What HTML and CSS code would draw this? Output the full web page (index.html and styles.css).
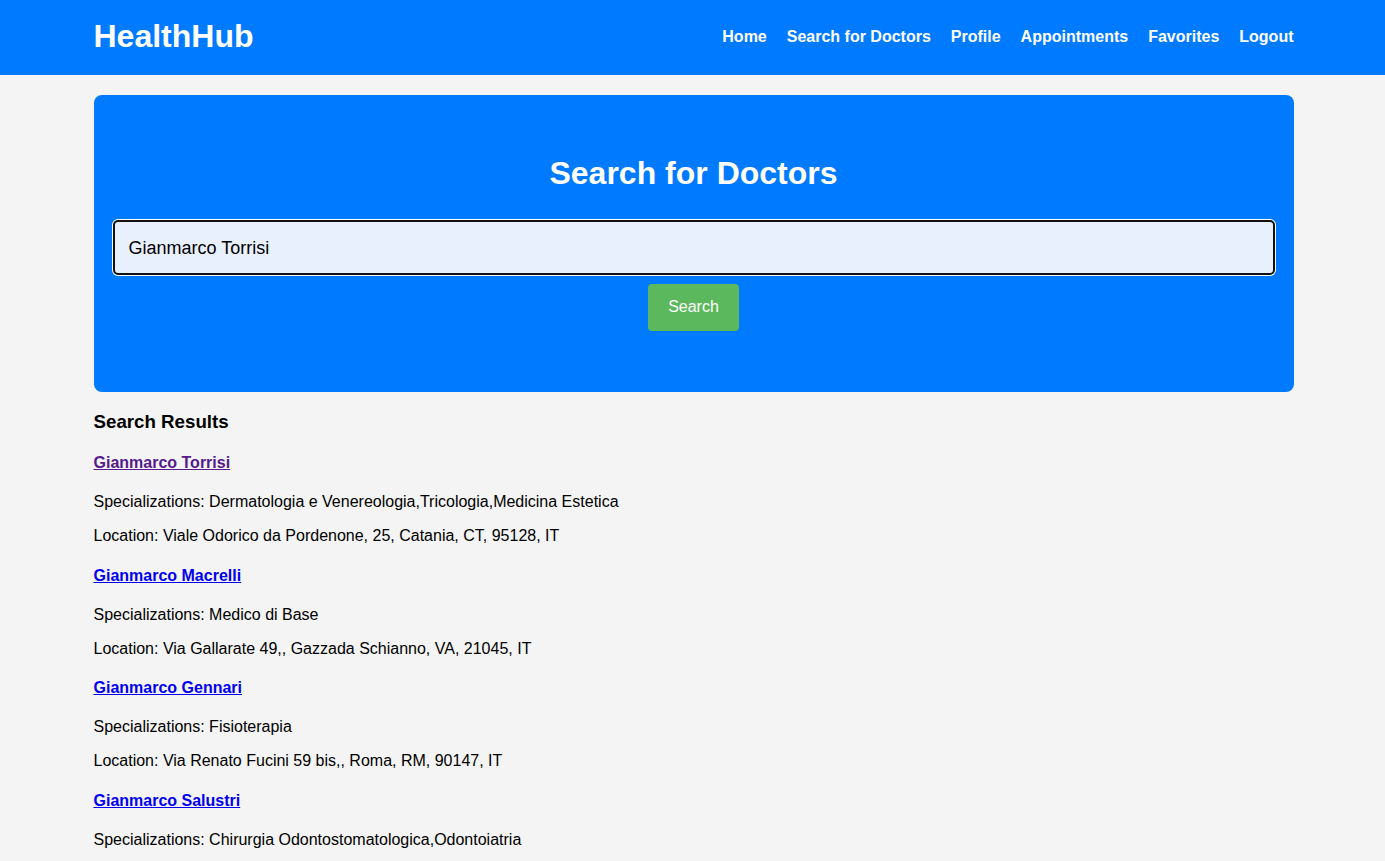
FILE: index.html
```html
<!DOCTYPE html>
<html lang="en">
<head>
<meta charset="utf-8">
<title>HealthHub - Search for Doctors</title>
<link rel="stylesheet" href="styles.css">
</head>
<body>
<header class="site-header">
  <div class="container header-inner">
    <h1 class="logo">HealthHub</h1>
    <nav class="main-nav">
      <a href="#">Home</a>
      <a href="#">Search for Doctors</a>
      <a href="#">Profile</a>
      <a href="#">Appointments</a>
      <a href="#">Favorites</a>
      <a href="#">Logout</a>
    </nav>
  </div>
</header>
<main class="container">
  <section class="search-box">
    <h2 class="search-title">Search for Doctors</h2>
    <form class="search-form">
      <input class="search-input" type="text" value="Gianmarco Torrisi">
      <button class="search-btn" type="button">Search</button>
    </form>
  </section>
  <section class="results">
    <h3 class="results-title">Search Results</h3>
    <div class="doctor">
      <h4 class="doctor-name"><a class="visited" href="#">Gianmarco Torrisi</a></h4>
      <p>Specializations: Dermatologia e Venereologia,Tricologia,Medicina Estetica</p>
      <p>Location: Viale Odorico da Pordenone, 25, Catania, CT, 95128, IT</p>
    </div>
    <div class="doctor">
      <h4 class="doctor-name"><a href="#">Gianmarco Macrelli</a></h4>
      <p>Specializations: Medico di Base</p>
      <p>Location: Via Gallarate 49,, Gazzada Schianno, VA, 21045, IT</p>
    </div>
    <div class="doctor">
      <h4 class="doctor-name"><a href="#">Gianmarco Gennari</a></h4>
      <p>Specializations: Fisioterapia</p>
      <p>Location: Via Renato Fucini 59 bis,, Roma, RM, 90147, IT</p>
    </div>
    <div class="doctor">
      <h4 class="doctor-name"><a href="#">Gianmarco Salustri</a></h4>
      <p>Specializations: Chirurgia Odontostomatologica,Odontoiatria</p>
    </div>
  </section>
</main>
</body>
</html>
```
FILE: styles.css
```css
* { box-sizing: border-box; }
body {
  margin: 0;
  padding-left: 2px;
  background: #f4f4f4;
  font-family: "Liberation Sans", Arial, sans-serif;
  color: #000;
}
.container {
  max-width: 1200px;
  margin: 0 auto;
}
.site-header {
  background: #007bff;
  color: #fff;
  padding: 18px 0 20px;
  margin-left: -2px;
  padding-left: 2px;
}
.header-inner {
  display: flex;
  align-items: center;
  justify-content: space-between;
}
.logo {
  margin: 0;
  font-size: 32px;
  line-height: 37px;
  font-weight: bold;
}
.main-nav {
  display: flex;
  gap: 20px;
}
.main-nav a {
  color: #fff;
  text-decoration: none;
  font-weight: bold;
  font-size: 16px;
}
.search-box {
  margin-top: 20px;
  background: #007bff;
  border-radius: 8px;
  padding: 40px 19px 41px;
  text-align: center;
}
.search-title {
  color: #fff;
  font-size: 32px;
  line-height: 37px;
  margin: 20px 0 28px;
}
.search-form {
  display: flex;
  flex-direction: column;
  align-items: center;
}
.search-input {
  width: 100%;
  height: 55px;
  background: #e8f0fe;
  border: 2px solid #111;
  border-radius: 5px;
  box-shadow: 0 0 0 1px #fff;
  padding: 1px 14px 0;
  font-family: "Liberation Sans", Arial, sans-serif;
  font-size: 18px;
  color: #000;
  outline: none;
}
.search-btn {
  margin: 9px 0 20px;
  background: #5cb85c;
  color: #fff;
  border: none;
  border-radius: 4px;
  padding: 14px 20px 15px;
  font-family: "Liberation Sans", Arial, sans-serif;
  font-size: 16px;
  line-height: 18px;
}
.results-title {
  font-size: 18.72px;
  margin: 18.72px 0;
}
.doctor-name {
  font-size: 16px;
  margin: 21.28px 0;
}
.doctor-name a { color: #0000ee; }
.doctor-name a.visited { color: #551a8b; }
.doctor p {
  font-size: 16px;
  margin: 16px 0;
}
```
